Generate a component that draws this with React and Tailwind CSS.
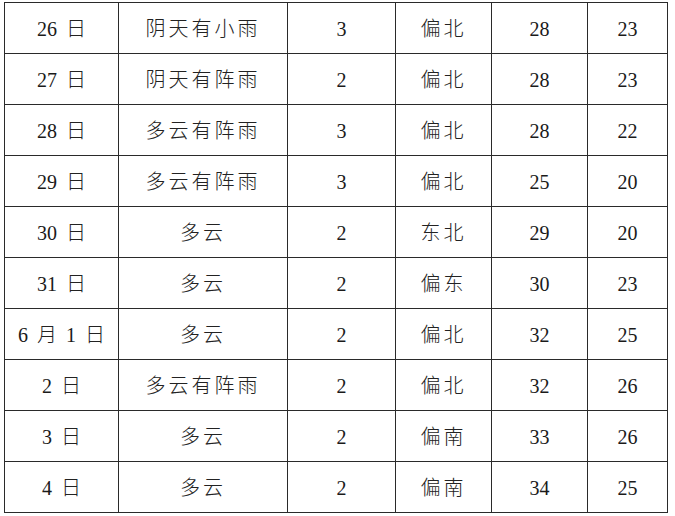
import React from 'react';

const rows = [
  ['26 日', '阴天有小雨', '3', '偏北', '28', '23'],
  ['27 日', '阴天有阵雨', '2', '偏北', '28', '23'],
  ['28 日', '多云有阵雨', '3', '偏北', '28', '22'],
  ['29 日', '多云有阵雨', '3', '偏北', '25', '20'],
  ['30 日', '多云', '2', '东北', '29', '20'],
  ['31 日', '多云', '2', '偏东', '30', '23'],
  ['6 月 1 日', '多云', '2', '偏北', '32', '25'],
  ['2 日', '多云有阵雨', '2', '偏北', '32', '26'],
  ['3 日', '多云', '2', '偏南', '33', '26'],
  ['4 日', '多云', '2', '偏南', '34', '25'],
];

// column widths measured off the scan
const widths = ['w-[114px]', 'w-[169px]', 'w-[108px]', 'w-[96px]', 'w-[96px]', 'w-[80px]'];

const cellStyle = (c) => {
  if (c === 1 || c === 3) return 'tracking-[3px] font-light text-[#222]';
  return '';
};

export default function App() {
  return (
    <div className="w-[675px] h-[516px] bg-white pl-[4px] pt-[2px] font-['Liberation_Serif','Noto_Sans_CJK_SC',serif] text-[#1a1a1a]">
      <table className="table-fixed border-collapse">
        <colgroup>
          {widths.map((w, i) => (
            <col key={i} className={w} />
          ))}
        </colgroup>
        <tbody>
          {rows.map((row, r) => (
            <tr key={r} className="h-[51px]">
              {row.map((cell, c) => (
                <td
                  key={c}
                  className={`border border-[#2a2a2a] p-0 pt-px text-center align-middle text-[20px] leading-none ${cellStyle(c)}`}
                >
                  {c === 0 ? (
                    <span className="inline-flex items-center gap-[9px]">
                      {cell.split(' ').map((part, i) => (
                        <span key={i} className={/\d/.test(part) ? '' : 'font-light text-[#222]'}>
                          {part}
                        </span>
                      ))}
                    </span>
                  ) : (
                    cell
                  )}
                </td>
              ))}
            </tr>
          ))}
        </tbody>
      </table>
    </div>
  );
}
